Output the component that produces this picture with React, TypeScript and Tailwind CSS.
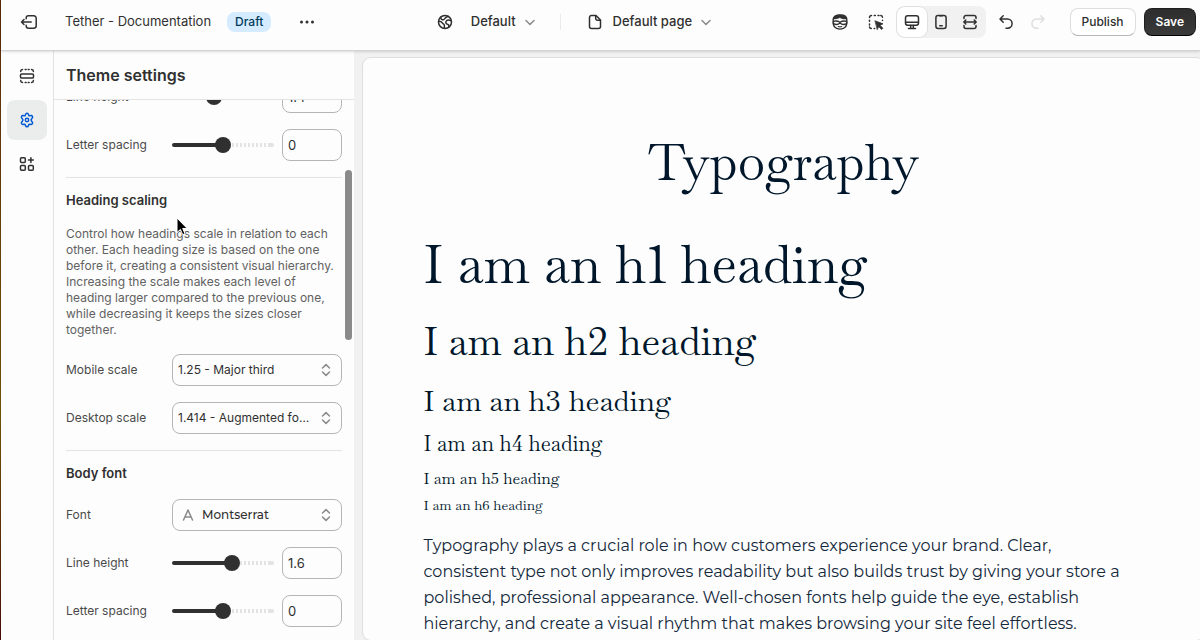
import { useState, type ReactNode } from "react";

function Icon({ children, className = "size-5" }: { children: ReactNode; className?: string }) {
  return (
    <svg
      viewBox="0 0 20 20"
      fill="none"
      stroke="currentColor"
      strokeWidth="1.5"
      strokeLinecap="round"
      strokeLinejoin="round"
      aria-hidden="true"
      className={`shrink-0 ${className}`}
    >
      {children}
    </svg>
  );
}

const ExitIcon = () => (
  <Icon>
    <path d="M7.2 6.8V6a2.2 2.2 0 0 1 2.2-2.2h5.4A2.4 2.4 0 0 1 17.2 6.200v7.600a2.400 2.400 0 0 1-2.400 2.400H9.400a2.200 2.200 0 0 1-2.200-2.200v-.8" />
    <path d="M12.200 10H2.500M5 7.500 2.500 10 5 12.500" />
  </Icon>
);

const DotsIcon = () => (
  <Icon>
    <g fill="currentColor" stroke="none">
      <circle cx="4.500" cy="10" r="1.500" />
      <circle cx="10" cy="10" r="1.500" />
      <circle cx="15.500" cy="10" r="1.500" />
    </g>
  </Icon>
);

const GlobeIcon = () => (
  <Icon>
    <circle cx="10" cy="10" r="6.500" />
    <path d="M5.600 5.300c.4 1.900 1.500 2.800 3 2.300 1.300-.4 1.500-1.800 2.600-2.300.8-.4 1.500-.6 2.100-1" />
    <path d="M3.600 9.300c1.700 0 2.900.5 3.600 1.500.7 1.100 1.900 1 2.100 2.200.2 1.100-.2 2 .3 3.300" />
    <path d="M16.300 9c-1.500-1-3.400-1.300-4.700-.3-1.400 1.200-.8 3.100.8 3.500 1.400.3 1.700 1.200 1.300 2.900" />
  </Icon>
);

const PageIcon = () => (
  <Icon>
    <path d="M11 3.500H6.500a2 2 0 0 0-2 2v9a2 2 0 0 0 2 2h7a2 2 0 0 0 2-2V8z" />
    <path d="M10.700 3.700v2.800a1.800 1.800 0 0 0 1.800 1.800h2.800" />
  </Icon>
);

const ChevronIcon = () => (
  <Icon>
    <path d="M6 8.500l4 4 4-4" />
  </Icon>
);

const HeroIcon = () => (
  <Icon>
    <path d="M3.200 7.500C3.200 4.700 6 2.900 10 2.900s6.800 1.800 6.800 4.600v3.700c0 3.500-3 5.900-6.800 5.900s-6.800-2.400-6.800-5.900z" strokeWidth="1.400" />
    <path d="M3.300 7C3.500 4.600 6 3 10 3s6.500 1.600 6.700 4c-2.800.3-5.300-.3-6.900-1.500C8.500 6.500 6.200 7.100 3.300 7z" fill="currentColor" strokeWidth=".5" />
    <path d="M3.400 9.300c2.400-.6 4.500-.4 6.600.9 2.100-1.300 4.200-1.500 6.600-.9v2.300c-2.500 1.400-4.800 1.100-6.600-.5-1.800 1.600-4.100 1.900-6.600.5z" fill="#fff" strokeWidth="1.300" />
    <path d="M8.300 14.500c1.100.4 2.300.4 3.400 0" strokeWidth="1.200" />
  </Icon>
);

const InspectIcon = () => (
  <Icon>
    <path d="M3.500 5.500a2 2 0 0 1 2-2M8.300 3.500h1M12 3.500h1M14.800 3.500a2 2 0 0 1 1.700 1.800M3.500 8.300v1M3.500 12v1M3.500 15a2 2 0 0 0 1.800 1.500M8.200 16.500h.5M16.500 8.300v.3" />
    <path d="m9.300 8.900 7.700 2.900-3 1.500 2.900 2.900-1.300 1.300-2.900-2.900-1.300 2.700z" fill="currentColor" strokeWidth=".8" />
  </Icon>
);

const DesktopIcon = () => (
  <Icon>
    <rect x="3.500" y="3.700" width="13" height="9.600" rx="2.200" />
    <path d="M3.700 10.300h12.600M8.700 13.500v2.800M11.300 13.500v2.800M6.500 16.400h7" />
  </Icon>
);

const MobileIcon = () => (
  <Icon>
    <rect x="4.900" y="3.500" width="10.200" height="13" rx="2.200" />
    <path d="M8.800 13.800h2.400M8.600 3.800h2.800" />
  </Icon>
);

const FullWidthIcon = () => (
  <Icon>
    <path d="M4 6.500V5.500a2 2 0 0 1 2-2h8a2 2 0 0 1 2 2v1M4 13.500v1a2 2 0 0 0 2 2h8a2 2 0 0 0 2-2v-1" />
    <path d="M4 10h12M5.800 8 3.800 10l2 2M14.200 8l2 2-2 2" />
  </Icon>
);

const UndoIcon = () => (
  <Icon>
    <path d="M7.200 3.800 4 7l3.200 3.200M4.200 7h7.300a4.600 4.600 0 0 1 0 9.200H10" />
  </Icon>
);

const RedoIcon = () => (
  <Icon>
    <path d="M12.800 3.800 16 7l-3.200 3.200M15.800 7H8.500a4.600 4.600 0 0 0 0 9.200H10" />
  </Icon>
);

const SectionsIcon = () => (
  <Icon>
    <rect x="3.500" y="7.900" width="13" height="4.200" rx="1.200" />
    <path d="M3.700 5.500a2 2 0 0 1 1.800-2M8.200 3.500h.9M11.200 3.500h.9M14.600 3.500a2 2 0 0 1 1.800 2M3.700 14.500a2 2 0 0 0 1.800 2M8.200 16.500h.9M11.200 16.500h.9M14.600 16.500a2 2 0 0 0 1.800-2" />
  </Icon>
);

const GearIcon = () => (
  <Icon>
    <path d="M8.600 4.200c.2-.6.700-1 1.400-1s1.200.4 1.400 1l.3.900c.2.500.7.800 1.200.7l1-.2c.6-.1 1.200.1 1.500.7.300.6.300 1.200-.1 1.700l-.7.800a1.800 1.800 0 0 0 0 2.400l.7.800c.4.500.4 1.100.1 1.700-.3.600-.9.800-1.500.7l-1-.2c-.5-.1-1 .2-1.200.7l-.3.900c-.2.600-.7 1-1.400 1s-1.200-.4-1.400-1l-.3-.9c-.2-.5-.7-.8-1.200-.7l-1 .2c-.6.1-1.200-.1-1.500-.7-.3-.6-.3-1.200.1-1.700l.7-.8a1.800 1.800 0 0 0 0-2.400l-.7-.8c-.4-.5-.4-1.100-.1-1.700.3-.6.9-.8 1.500-.7l1 .2c.5.100 1-.2 1.200-.7z" />
    <circle cx="10" cy="10" r="1.700" />
  </Icon>
);

const AppsIcon = () => (
  <Icon>
    <rect x="3.500" y="3.700" width="4.800" height="4.800" rx="1" />
    <rect x="3.500" y="11.500" width="4.800" height="4.800" rx="1" />
    <rect x="11.500" y="11.500" width="4.800" height="4.800" rx="1" />
    <path d="M13.900 3.700v4.800M11.500 6.100h4.800" />
  </Icon>
);

const UpDownIcon = () => (
  <Icon className="size-5 text-[#8a8a8a]">
    <path d="M6.500 8 10 4.600 13.500 8M6.500 12l3.500 3.400 3.500-3.400" />
  </Icon>
);

const FontIcon = () => (
  <Icon className="size-5 text-[#8a8a8a]">
    <path d="M5.500 15 10 5l4.500 10M7 12h6" />
  </Icon>
);

type RangeProps = { id: string; label: string; initial: number; min: number; max: number; step: number };

function RangeRow({ id, label, initial, min, max, step }: RangeProps) {
  const [value, setValue] = useState(String(initial));
  const ratio = (Number(value) - min) / (max - min);
  const track = `linear-gradient(to right, #303030 ${ratio * 100}%, transparent ${ratio * 100}%), linear-gradient(to left, #e3e3e3 6px, transparent 6px), repeating-linear-gradient(to right, #e3e3e3 0 2px, transparent 2px 4px)`;
  return (
    <div className="flex h-8 items-center">
      <label htmlFor={id} className="w-[106px] shrink-0">{label}</label>
      <input
        id={id}
        type="range"
        min={min}
        max={max}
        step={step}
        value={value}
        onChange={(e) => setValue(e.target.value)}
        style={{ backgroundImage: track }}
        className="mr-2 h-1 w-0 flex-1 appearance-none rounded-full [&::-webkit-slider-thumb]:size-4 [&::-webkit-slider-thumb]:appearance-none [&::-webkit-slider-thumb]:rounded-full [&::-webkit-slider-thumb]:bg-[#303030]"
      />
      <input
        type="text"
        aria-label={`${label} value`}
        value={value}
        onChange={(e) => setValue(e.target.value)}
        className="h-8 w-[60px] rounded-lg border border-[#b5b5b5] bg-[#fdfdfd] px-[5px] text-[13px] text-[#303030]"
      />
    </div>
  );
}

function SelectRow({ id, label, options }: { id: string; label: string; options: string[] }) {
  return (
    <div className="flex h-8 items-center">
      <label htmlFor={id} className="w-[106px] shrink-0">{label}</label>
      <div className="relative min-w-0 flex-1">
        <select
          id={id}
          className="block h-8 w-full appearance-none truncate rounded-lg border border-[#b5b5b5] bg-[#fdfdfd] pr-7 pl-[5px] text-xs text-[#303030]"
        >
          {options.map((o) => (
            <option key={o}>{o}</option>
          ))}
        </select>
        <span className="pointer-events-none absolute top-1.5 right-1.5">
          <UpDownIcon />
        </span>
      </div>
    </div>
  );
}

function Toolbar() {
  return (
    <header className="relative z-10 flex h-[51px] shrink-0 items-start justify-between border-b border-[#d4d4d4] bg-[#fdfdfd] pt-1.5 pr-1 pl-[18px] shadow-sm">
      <div className="flex h-8 items-center">
        <button type="button" aria-label="Exit editor"><ExitIcon /></button>
        <span className="ml-[26px] text-[13px]">Tether - Documentation</span>
        <span className="ml-4 rounded-lg bg-[#d5ebff] px-2 text-xs leading-5 font-medium text-[#003a5a]">Draft</span>
        <button type="button" aria-label="More actions" className="ml-[26px]"><DotsIcon /></button>
      </div>
      <div className="flex h-8 items-center pl-1 text-[13px] font-medium">
        <button type="button" className="flex items-center">
          <GlobeIcon />
          <span className="ml-4">Default</span>
          <span className="ml-1 text-[#8a8a8a]"><ChevronIcon /></span>
        </button>
        <span className="mx-5 h-4 w-px bg-[#ebebeb]" />
        <button type="button" className="ml-1 flex items-center">
          <PageIcon />
          <span className="ml-2">Default page</span>
          <span className="ml-1 text-[#8a8a8a]"><ChevronIcon /></span>
        </button>
      </div>
      <div className="flex h-8 items-center">
        <button type="button" aria-label="Sidekick"><HeroIcon /></button>
        <button type="button" aria-label="Inspector" className="ml-4"><InspectIcon /></button>
        <div className="ml-2.5 flex rounded-lg bg-[#f1f1f1] p-px">
          <button type="button" aria-label="Desktop" className="flex h-[30px] w-[30px] items-center justify-center rounded-lg bg-white shadow-[0_0_0_1px_#e0e0e0]"><DesktopIcon /></button>
          <button type="button" aria-label="Mobile" className="flex h-[30px] w-[29px] items-center justify-center"><MobileIcon /></button>
          <button type="button" aria-label="Fullscreen" className="flex h-[30px] w-[29px] items-center justify-center"><FullWidthIcon /></button>
        </div>
        <button type="button" aria-label="Undo" className="ml-2.5"><UndoIcon /></button>
        <button type="button" aria-label="Redo" disabled className="ml-3 text-[#dedede]"><RedoIcon /></button>
        <button type="button" className="ml-[22px] h-7 rounded-lg border border-[#dedede] border-b-[#b5b5b5] bg-white px-[11px] text-xs font-medium">Publish</button>
        <button type="button" className="ml-2 h-7 rounded-lg border border-[#1f1f1f] border-b-black bg-linear-to-b from-[#2d2d2d] to-[#3a3a3a] px-[11px] text-xs font-semibold text-white">Save</button>
      </div>
    </header>
  );
}

function Rail() {
  return (
    <nav aria-label="Editor" className="flex w-[53px] shrink-0 flex-col items-center gap-1 border-r border-[#e3e3e3] bg-[#fdfdfd] pt-[5px]">
      <button type="button" aria-label="Sections" className="flex size-10 items-center justify-center"><SectionsIcon /></button>
      <button type="button" aria-label="Theme settings" className="flex size-10 items-center justify-center rounded-lg bg-[#ebeded] text-[#005bd3]"><GearIcon /></button>
      <button type="button" aria-label="App embeds" className="flex size-10 items-center justify-center"><AppsIcon /></button>
    </nav>
  );
}

function SettingsPanel() {
  return (
    <aside className="flex w-[300px] shrink-0 flex-col bg-[#fdfdfd]">
      <h1 className="flex h-[49px] shrink-0 items-center border-b border-[#e3e3e3] px-3 text-base font-semibold">Theme settings</h1>
      <div className="relative min-h-0 flex-1 overflow-hidden px-3 text-xs leading-5 text-[#4a4a4a]">
        <section className="-mt-[19px] flex flex-col gap-4 border-b border-[#e3e3e3] pb-4">
          <RangeRow id="heading-line" label="Line height" initial={1.4} min={1} max={2} step={0.1} />
          <RangeRow id="heading-letter" label="Letter spacing" initial={0} min={-10} max={10} step={1} />
        </section>
        <section className="flex flex-col gap-4 border-b border-[#e3e3e3] pt-3 pb-4">
          <h2 className="text-[13px] leading-5 font-semibold text-[#303030]">Heading scaling</h2>
          <p className="leading-4 text-[#616161]">
            Control how headings scale in relation to each other. Each heading size is based on the one before it,
            creating a consistent visual hierarchy. Increasing the scale makes each level of heading larger compared to
            the previous one, while decreasing it keeps the sizes closer together.
          </p>
          <SelectRow id="mobile-scale" label="Mobile scale" options={["1.25 - Major third"]} />
          <SelectRow id="desktop-scale" label="Desktop scale" options={["1.414 - Augmented fourth"]} />
        </section>
        <section className="flex flex-col gap-4 pt-3">
          <h2 className="text-[13px] leading-5 font-semibold text-[#303030]">Body font</h2>
          <div className="flex h-8 items-center">
            <label htmlFor="body-font" className="w-[106px] shrink-0">Font</label>
            <button id="body-font" type="button" className="flex h-8 flex-1 items-center rounded-lg border border-[#b5b5b5] px-[5px] font-['Montserrat','Inter',sans-serif] font-medium text-[#303030]">
              <FontIcon />
              <span className="ml-1 flex-1 text-left">Montserrat</span>
              <UpDownIcon />
            </button>
          </div>
          <RangeRow id="body-line" label="Line height" initial={1.6} min={1} max={2} step={0.1} />
          <RangeRow id="body-letter" label="Letter spacing" initial={0} min={-10} max={10} step={1} />
        </section>
        <div className="absolute top-[70px] right-0.5 h-[170px] w-[7px] rounded-full bg-[#8a8a8a]" />
        <svg viewBox="0 0 12 20" className="absolute top-[117px] left-[122px] h-5 w-3" aria-hidden="true">
          <path d="M1 1v14.500l3.400-3.100 2.300 5.300 2.300-1-2.300-5.200h4.500z" fill="#000" stroke="#fff" strokeWidth="1" />
        </svg>
      </div>
    </aside>
  );
}

function Preview() {
  return (
    <main className="min-w-0 flex-1 overflow-hidden bg-[#f1f1f1] pt-[7px] pl-[9px]">
      <article className="-mr-1 h-full overflow-hidden rounded-lg bg-[#fdfdfd] px-6 shadow-[0_0_0_1px_#dedede]">
        <div className="mx-auto max-w-[720px] font-['Baskervville','Liberation_Serif',serif] lining-nums text-[#00172b]">
          <h2 className="pt-[71px] text-center text-[50px] leading-[68px]">Typography</h2>
          <h1 className="mt-8 text-[53px] leading-[72px]">I am an h1 heading</h1>
          <h2 className="mt-3.5 text-[39px] leading-[54px]">I am an h2 heading</h2>
          <h3 className="mt-3 text-[29px] leading-10">I am an h3 heading</h3>
          <h4 className="mt-2 text-[21px] leading-[30px]">I am an h4 heading</h4>
          <h5 className="mt-2 text-base leading-6">I am an h5 heading</h5>
          <h6 className="mt-1 text-sm leading-5">I am an h6 heading</h6>
          <p className="mt-4.5 pr-2 font-['Montserrat','Inter',sans-serif] text-base leading-[26px] text-[#13283b]">
            Typography plays a crucial role in how customers experience your brand. Clear, consistent type not only
            improves readability but also builds trust by giving your store a polished, professional appearance.
            Well-chosen fonts help guide the eye, establish hierarchy, and create a visual rhythm that makes browsing
            your site feel effortless.
          </p>
        </div>
      </article>
    </main>
  );
}

export default function App() {
  return (
    <div className="flex h-screen overflow-hidden bg-[#f1f1f1] font-['Inter',sans-serif] text-[#303030]">
      <div className="w-px shrink-0 bg-linear-to-b from-[#5a2a0a] via-[#6b5200] via-65% to-[#4a0a08]" />
      <div className="flex min-w-0 flex-1 flex-col">
        <Toolbar />
        <div className="flex min-h-0 flex-1">
          <Rail />
          <SettingsPanel />
          <Preview />
        </div>
      </div>
    </div>
  );
}
